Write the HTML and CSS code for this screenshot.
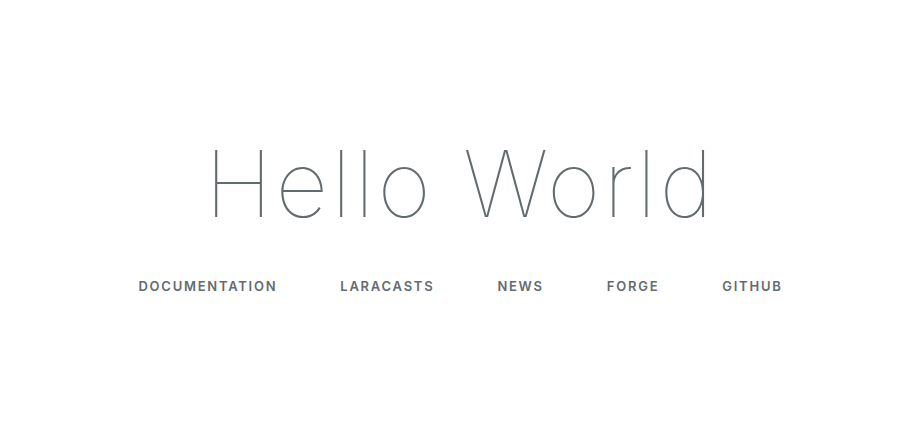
FILE: index.html
```html
<!DOCTYPE html>
<html>
<head>
<meta charset="utf-8">
<title>Laravel</title>
<link rel="stylesheet" href="styles.css">
</head>
<body>
<div class="page">
  <div class="content">
    <div class="title">Hello World</div>
    <nav class="links">
      <a href="#">Documentation</a>
      <a href="#">Laracasts</a>
      <a href="#">News</a>
      <a href="#">Forge</a>
      <a href="#">GitHub</a>
    </nav>
  </div>
</div>
</body>
</html>
```
FILE: styles.css
```css
html, body {
  margin: 0;
  background: #fff;
  color: #636b6f;
  font-family: "Inter", "Liberation Sans", sans-serif;
}
.page {
  height: 100vh;
  display: flex;
  align-items: center;
  justify-content: center;
}
.content {
  text-align: center;
  padding-left: 24px;
}
.title {
  font-size: 92px;
  line-height: 92px;
  font-weight: 100;
  letter-spacing: 3.2px;
  margin-bottom: 48.6px;
}
.links {
  display: flex;
  justify-content: center;
  gap: 63px;
  line-height: 16px;
}
.links a {
  color: #636b6f;
  font-size: 13px;
  font-weight: 600;
  letter-spacing: 1.75px;
  text-decoration: none;
  text-transform: uppercase;
}
```
